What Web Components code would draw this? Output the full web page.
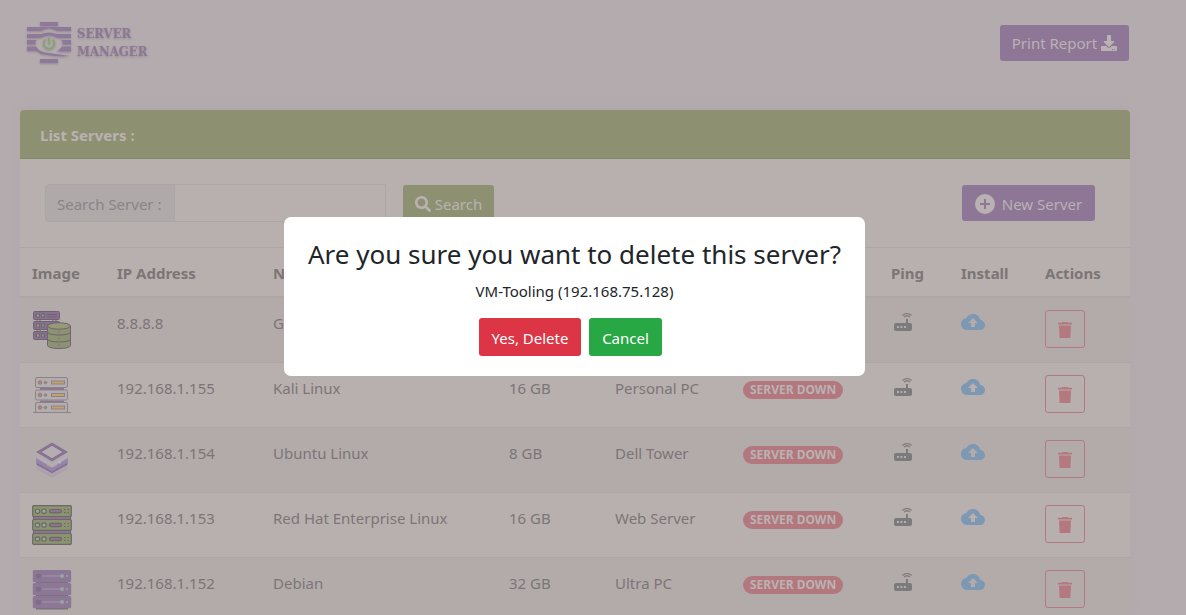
<!DOCTYPE html>
<html lang="en">
<head>
<meta charset="utf-8">
<meta name="viewport" content="width=device-width, initial-scale=1">
<title>Server Manager</title>
<style>
  :root {
    --page: #b4abaf;
    --card: #b8b0ae;
    --stripe: #b2abaa;
    --line: #aca7a7;
    --olive: #8d9172;
    --purple: #8d7696;
    --ink: #7c7577;
    --pale: #bab2b2;
    --danger: #b4797f;
  }
  html, body { height: 100%; }
  body {
    margin: 0;
    overflow: hidden;
    background: var(--page);
    color: var(--ink);
    font: 15px/24px "Noto Sans", "Open Sans", sans-serif;
  }
</style>
</head>
<body>
<server-app></server-app>
<confirm-dialog>
  <span slot="title">Are you sure you want to delete this server?</span>
  <span slot="detail">VM-Tooling (192.168.75.128)</span>
</confirm-dialog>

<script>
const define = (name, html, setup) => {
  const template = document.createElement('template');
  template.innerHTML = html;
  customElements.define(name, class extends HTMLElement {
    constructor() {
      super();
      this.attachShadow({ mode: 'open' }).append(template.content.cloneNode(true));
    }
    connectedCallback() { if (setup) setup(this, this.shadowRoot); }
  });
};

const icons = {
  download: ['0 0 512 512', '<path fill-rule="evenodd" d="M216 0h80c13.300 0 24 10.700 24 24v168h87.700c17.800 0 26.700 21.500 14.100 34.100L269.700 378.300c-7.500 7.500-19.800 7.500-27.300 0L90.100 226.100c-12.600-12.600-3.700-34.100 14.100-34.100H192V24c0-13.300 10.700-24 24-24zm296 376v112c0 13.300-10.700 24-24 24H24c-13.300 0-24-10.700-24-24V376c0-13.300 10.700-24 24-24h146.700l49 49c20.100 20.100 52.500 20.100 72.600 0l49-49H488c13.300 0 24 10.700 24 24zm-124 88c0-11-9-20-20-20s-20 9-20 20 9 20 20 20 20-9 20-20zm64 0c0-11-9-20-20-20s-20 9-20 20 9 20 20 20 20-9 20-20z"/>'],
  search: ['0 0 512 512', '<path d="M505 442.700L405.300 343c-4.500-4.500-10.600-7-17-7H372c27.600-35.300 44-79.700 44-128C416 93.100 322.900 0 208 0S0 93.100 0 208s93.100 208 208 208c48.300 0 92.700-16.400 128-44v16.300c0 6.400 2.500 12.500 7 17l99.700 99.700c9.400 9.400 24.600 9.400 33.900 0l28.300-28.300c9.400-9.400 9.400-24.600.1-34zM208 336c-70.700 0-128-57.200-128-128 0-70.700 57.200-128 128-128 70.700 0 128 57.200 128 128 0 70.700-57.200 128-128 128z"/>'],
  plus: ['0 0 20 20', '<path fill-rule="evenodd" d="M10 0a10 10 0 1 1 0 20a10 10 0 0 1 0-20zM9 5v4H5v2h4v4h2v-4h4V9h-4V5z"/>'],
  router: ['0 0 24 24', '<path d="M20.200 5.900l.8-.8C19.600 3.700 17.800 3 16 3s-3.600.7-5 2.100l.8.8C13 4.800 14.500 4.200 16 4.200s3 .6 4.200 1.700zm-.9.8c-.9-.9-2.100-1.400-3.300-1.400s-2.400.5-3.300 1.400l.8.8c.7-.7 1.600-1 2.500-1s1.800.3 2.500 1zM19 13h-2V9h-2v4H5c-1.100 0-2 .9-2 2v4c0 1.100.9 2 2 2h14c1.100 0 2-.9 2-2v-4c0-1.100-.9-2-2-2zM8 18H6v-2h2zm3.500 0h-2v-2h2zm3.500 0h-2v-2h2z"/>'],
  cloud: ['0 0 24 24', '<path d="M19.350 10.040C18.670 6.590 15.640 4 12 4 9.110 4 6.600 5.640 5.350 8.040 2.340 8.360 0 10.910 0 14c0 3.310 2.690 6 6 6h13c2.760 0 5-2.240 5-5 0-2.640-2.050-4.780-4.650-4.960zM14 13v4h-4v-4H7l5-5 5 5z"/>'],
  trash: ['0 0 16 16', '<path d="M5.500 0h5l.7.8H15V2.500H1V.8h3.800zM2 3.500h12L13.400 16H2.600z"/>']
};
define('app-icon', `
  <style>
    :host { display: inline-flex; flex: none; width: 16px; height: 16px; }
    svg { display: block; width: 100%; height: 100%; fill: currentColor; }
  </style>
  <svg aria-hidden="true"></svg>`, (host, root) => {
  const [box, shape] = icons[host.getAttribute('name')];
  const svg = root.querySelector('svg');
  svg.setAttribute('viewBox', box);
  svg.innerHTML = shape;
});

const each = (list, draw) => list.map(draw).join('');
const thumbs = {
  database: `
    <g stroke="#706474" stroke-width="1">
      <path d="M5 9v14M8 9v14M21 9v4M24 9v4" fill="none"/>
      ${each([1.5, 11.5, 21.5], y => `<rect x="1.500" y="${y}" width="26" height="8" rx="1" fill="#87718f"/><rect x="4.500" y="${y + 2.5}" width="3" height="3" fill="#a6a07c"/><rect x="9.500" y="${y + 2.5}" width="3" height="3" fill="#7f9a96"/><path d="M15 ${y + 3}h10M15 ${y + 5.5}h10"/>`)}
      <path d="M15.500 16v19.500c0 4 23 4 23 0V16" fill="#8d9270"/>
      <ellipse cx="27" cy="16" rx="11.500" ry="3.200" fill="#969a75"/>
      <path d="M15.500 22c0 4 23 4 23 0M15.500 29c0 4 23 4 23 0" fill="none"/>
      <path d="M26.500 22h1M26.500 28.500h1M26.500 35h1"/>
    </g>`,
  rack: `
    <path d="M8 13h24v3H8zM8 25.500h24v3H8z" fill="#8b7592"/>
    ${each([2.5, 15, 27.500], y => `<g stroke="#8c8388"><rect x="3.500" y="${y}" width="32" height="10" rx="1.500" fill="#b4adb0"/><circle cx="8" cy="${y + 5}" r="1.800" fill="#bd7b70"/><circle cx="13.500" cy="${y + 5}" r="1.300" fill="#81957d"/><rect x="19.500" y="${y + 3.5}" width="13" height="3" fill="#c0a168"/></g>`)}
    <path d="M1 37.500h38" stroke="#8c8388"/>`,
  layers: `
    <path d="M4 23l16 9.500L36 23v3l-16 9.500L4 26z" fill="#aca2b2"/>
    <path d="M4 27l16 9 16-9M5 29l15 8 15-8" fill="none" stroke="#a397a6" stroke-width=".6"/>
    <path d="M4 18l16 9.500L36 18v5.500L20 33 4 23.500z" fill="#9683ab"/>
    <path d="M5 24l15 8.500L35 24" fill="none" stroke="#85718d" stroke-width="1.500"/>
    <path d="M4 14.500l16 9.500 16-9.500v3L20 27 4 17.500z" fill="#b3abb6"/>
    <path fill-rule="evenodd" d="M20 2.500L36 12l-16 9.500L4 12zM20 6l-10 6 10 6 10-6z" fill="#8a7392"/>
    <path d="M20 6l10 6-10 6-10-6z" fill="#b5adb0"/>
    <path d="M15 25l3 2M21 27l4-2" stroke="#bba07a"/><path d="M28 21v2.500" stroke="#c0bcc2" stroke-width="1.500"/>`,
  stack: `
    <path d="M1.500 11h37v4h-37zM1.500 25h37v4h-37z" fill="#8b7491" stroke="#6c666b"/>
    ${each([.7, 14.500, 28.500], y => `<g stroke="#6a6965" stroke-width="1.200"><rect x=".7" y="${y}" width="38.600" height="10.800" rx="1" fill="#8d9270"/><circle cx="5.500" cy="${y + 5.500}" r="2.200" fill="#97aaa5"/><circle cx="12" cy="${y + 5.500}" r="2.200" fill="#97aaa5"/><rect x="17.500" y="${y + 3.800}" width="12" height="3.400" rx="1.700" fill="#8b7491"/><path d="M32 ${y + 4}h1.500M35.500 ${y + 4}h1.500M32 ${y + 7}h1.500M35.500 ${y + 7}h1.500"/></g>`)}`,
  tower: `
    <path d="M4 11h32v28.500H4z" fill="#75717a"/>
    ${each([0, 13, 26], y => `<rect x=".8" y="${y}" width="38.400" height="12.200" rx="1.500" fill="#8d7797"/><path d="M4 ${y + 4}h5v4.500H4z" fill="#7d6d87"/><path d="M10.500 ${y + 6}H30" stroke="#a296a7"/><circle cx="30" cy="${y + 6}" r="2" fill="#96a5a3"/><circle cx="35" cy="${y + 6}" r="1" fill="#87aca0"/>`)}`
};
define('server-thumb', `
  <style>
    :host { display: block; width: 40px; height: 40px; }
    svg { display: block; }
  </style>
  <svg width="40" height="40" viewBox="0 0 40 40" role="img" aria-label="Server"></svg>`, (host, root) => {
  root.querySelector('svg').innerHTML = thumbs[host.getAttribute('kind')];
});

define('app-logo', `
  <style>
    :host { display: block; }
    a { display: flex; align-items: center; gap: 6px; color: var(--purple); text-decoration: none;
        font: bold 13px/18px "DejaVu Serif Condensed", "Liberation Serif", serif; filter: drop-shadow(0 1px 1px #93898d); }
    span { display: block; }
    svg { display: block; }
  </style>
  <a href="#">
    <svg width="44" height="42" viewBox="0 0 44 42" aria-hidden="true">
      <path d="M13 0h18v4H13zM13 37h18v4H13zM0 5h44v4H30q-8-5-16 0H0zM0 12h14q8-3 16 0h14v4H31q-9-5-18 0H0zM0 18h10q-3 2-1 4.500H0zM44 18H34q3 2 1 4.500h9zM0 24.500h9q3 5 9 6l25 3.500q-12 1.500-29-2Q10 28.500 8 29H0zM44 24.500h-9q-2 3-5 5h14z" fill="#8f799a"/>
      <g fill="none" stroke="#86a373" stroke-width="2"><path d="M18.500 17.500a5.300 5.300 0 1 0 7 0M22 15.500v7"/></g>
    </svg>
    <div><span>SERVER</span><span>MANAGER</span></div>
  </a>`);

define('app-button', `
  <style>
    :host { display: inline-block; }
    button { display: flex; align-items: center; justify-content: center; gap: var(--gap, 4px);
      box-sizing: border-box; width: 100%; height: var(--height, 36px); margin: 0; padding: var(--top, 2px) var(--pad, 12px) 0;
      border: var(--outline, 0); border-radius: 3px; background: var(--fill, transparent);
      color: var(--text, var(--pale)); font: inherit; white-space: nowrap; cursor: pointer; }
  </style>
  <button type="button"><slot></slot></button>`, (host, root) => {
  if (host.hasAttribute('label')) root.querySelector('button').setAttribute('aria-label', host.getAttribute('label'));
});

define('search-form', `
  <style>
    :host { display: block; }
    form { display: flex; align-items: center; }
    label, input { box-sizing: border-box; height: 38px; border: 1px solid var(--line); }
    label { width: 130px; padding: 7px 11px 5px; border-radius: 4px 0 0 4px; background: #afa9aa; color: #8b8486; white-space: nowrap; }
    input { width: 211px; margin: 0 17px 0 0; padding: 6px 12px; border-left: 0; border-radius: 0; background: transparent; color: inherit; font: inherit; outline: 0; }
    app-button { width: 91px; --fill: var(--olive); --pad: 8px; }
  </style>
  <form>
    <label for="query">Search Server :</label><input id="query" type="text">
    <app-button><app-icon name="search"></app-icon>Search</app-button>
  </form>`);

const servers = [
  ['database', '8.8.8.8', 'Google', '', '', ''],
  ['rack', '192.168.1.155', 'Kali Linux', '16 GB', 'Personal PC', 'SERVER DOWN'],
  ['layers', '192.168.1.154', 'Ubuntu Linux', '8 GB', 'Dell Tower', 'SERVER DOWN'],
  ['stack', '192.168.1.153', 'Red Hat Enterprise Linux', '16 GB', 'Web Server', 'SERVER DOWN'],
  ['tower', '192.168.1.152', 'Debian', '32 GB', 'Ultra PC', 'SERVER DOWN']
];
define('server-table', `
  <style>
    :host { display: block; }
    table { width: 100%; border-spacing: 0; table-layout: fixed; }
    th, td { padding: 12px; border-top: 1px solid var(--line); text-align: left; vertical-align: top; white-space: nowrap; line-height: 26px; }
    th { padding-bottom: 10px; border-bottom: 1px solid var(--line); font-weight: 700; }
    td { height: 40px; }
    tbody tr:nth-child(odd) { background: var(--stripe); }
    .image { width: 61px; } .ip { width: 132px; } .memory { width: 82px; } .type { width: 104px; }
    .status { width: 124px; } .ping { width: 46px; } .install { width: 60px; } .actions { width: 73px; }
    .badge { display: inline-block; padding: 0 7px; border-radius: 9px; background: #b2787d; color: var(--pale);
      font-size: 12px; font-weight: 700; line-height: 18px; }
    td app-icon { display: block; width: 24px; height: 24px; }
    a { display: block; width: 24px; }
    .router { color: #7b7b7d; } .cloud { color: #7c98b3; }
    app-button { display: block; width: 40px; --height: 38px; --pad: 0; --outline: 1px solid var(--danger); --text: var(--danger); }
    app-button app-icon { width: 16px; height: 16px; }
  </style>
  <table>
    <thead><tr>
      <th class="image">Image</th><th class="ip">IP Address</th><th>Name</th><th class="memory" aria-label="Memory"></th>
      <th class="type" aria-label="Type"></th><th class="status" aria-label="Status"></th><th class="ping">Ping</th>
      <th class="install">Install</th><th class="actions">Actions</th>
    </tr></thead>
    <tbody></tbody>
  </table>`, (host, root) => {
  root.querySelector('tbody').innerHTML = each(servers, ([kind, ip, name, memory, type, status]) => `<tr>
    <td><server-thumb kind="${kind}"></server-thumb></td><td>${ip}</td><td>${name}</td><td>${memory}</td><td>${type}</td>
    <td>${status && `<span class="badge">${status}</span>`}</td>
    <td><a class="router" href="#" aria-label="Ping"><app-icon name="router"></app-icon></a></td>
    <td><a class="cloud" href="#" aria-label="Install"><app-icon name="cloud"></app-icon></a></td>
    <td><app-button label="Delete"><app-icon name="trash"></app-icon></app-button></td></tr>`);
});

define('server-card', `
  <style>
    :host { display: block; border-radius: 4px 4px 0 0; background: var(--card); box-shadow: 0 -6px 10px -4px #aca7a9; }
    h2 { margin: 0; padding: 13px 20px 11px; border-bottom: 1px solid #85896c; border-radius: 4px 4px 0 0;
      background: var(--olive); color: var(--pale); font-size: 15px; line-height: 24px; font-weight: 700; }
    .tools { display: flex; align-items: center; justify-content: space-between; padding: 25px 35px 25px 25px; }
    .new { width: 133px; --fill: var(--purple); --gap: 7px; }
    .new app-icon { width: 20px; height: 20px; }
  </style>
  <section>
    <h2><slot></slot></h2>
    <div class="tools">
      <search-form></search-form>
      <app-button class="new"><app-icon name="plus"></app-icon>New Server</app-button>
    </div>
    <server-table></server-table>
  </section>`);

define('server-app', `
  <style>
    :host { display: block; padding: 0 56px 24px 20px; }
    header { display: flex; align-items: center; justify-content: space-between; height: 86px; padding: 0 1px 24px 7px; }
    header app-button { width: 129px; --fill: var(--purple); --pad: 8px; --top: 0; }
  </style>
  <header>
    <app-logo></app-logo>
    <app-button>Print Report<app-icon name="download"></app-icon></app-button>
  </header>
  <main><server-card>List Servers :</server-card></main>`);

define('confirm-dialog', `
  <style>
    :host { position: fixed; inset: 0; display: flex; align-items: center; justify-content: center;
      box-sizing: border-box; padding: 0 37px 22px 0; color: #212529; }
    .panel { box-sizing: border-box; width: 581px; max-width: 100%; padding: 20px; border-radius: 7px; background: #fff; text-align: center; }
    h3 { margin: 0 0 8px; font-size: 26px; line-height: 34px; font-weight: 400; white-space: nowrap; }
    p { margin: 0 0 15px; }
    .actions { display: flex; justify-content: center; gap: 8px; padding-right: 8px; }
    app-button { --height: 38px; --text: #fff; }
    .yes { width: 102px; --fill: #dc3545; }
    .no { width: 73px; --fill: #28a745; }
  </style>
  <div class="panel" role="dialog" aria-modal="true" aria-labelledby="title">
    <h3 id="title"><slot name="title"></slot></h3>
    <p><slot name="detail"></slot></p>
    <div class="actions">
      <app-button class="yes">Yes, Delete</app-button>
      <app-button class="no">Cancel</app-button>
    </div>
  </div>`);
</script>
</body>
</html>
